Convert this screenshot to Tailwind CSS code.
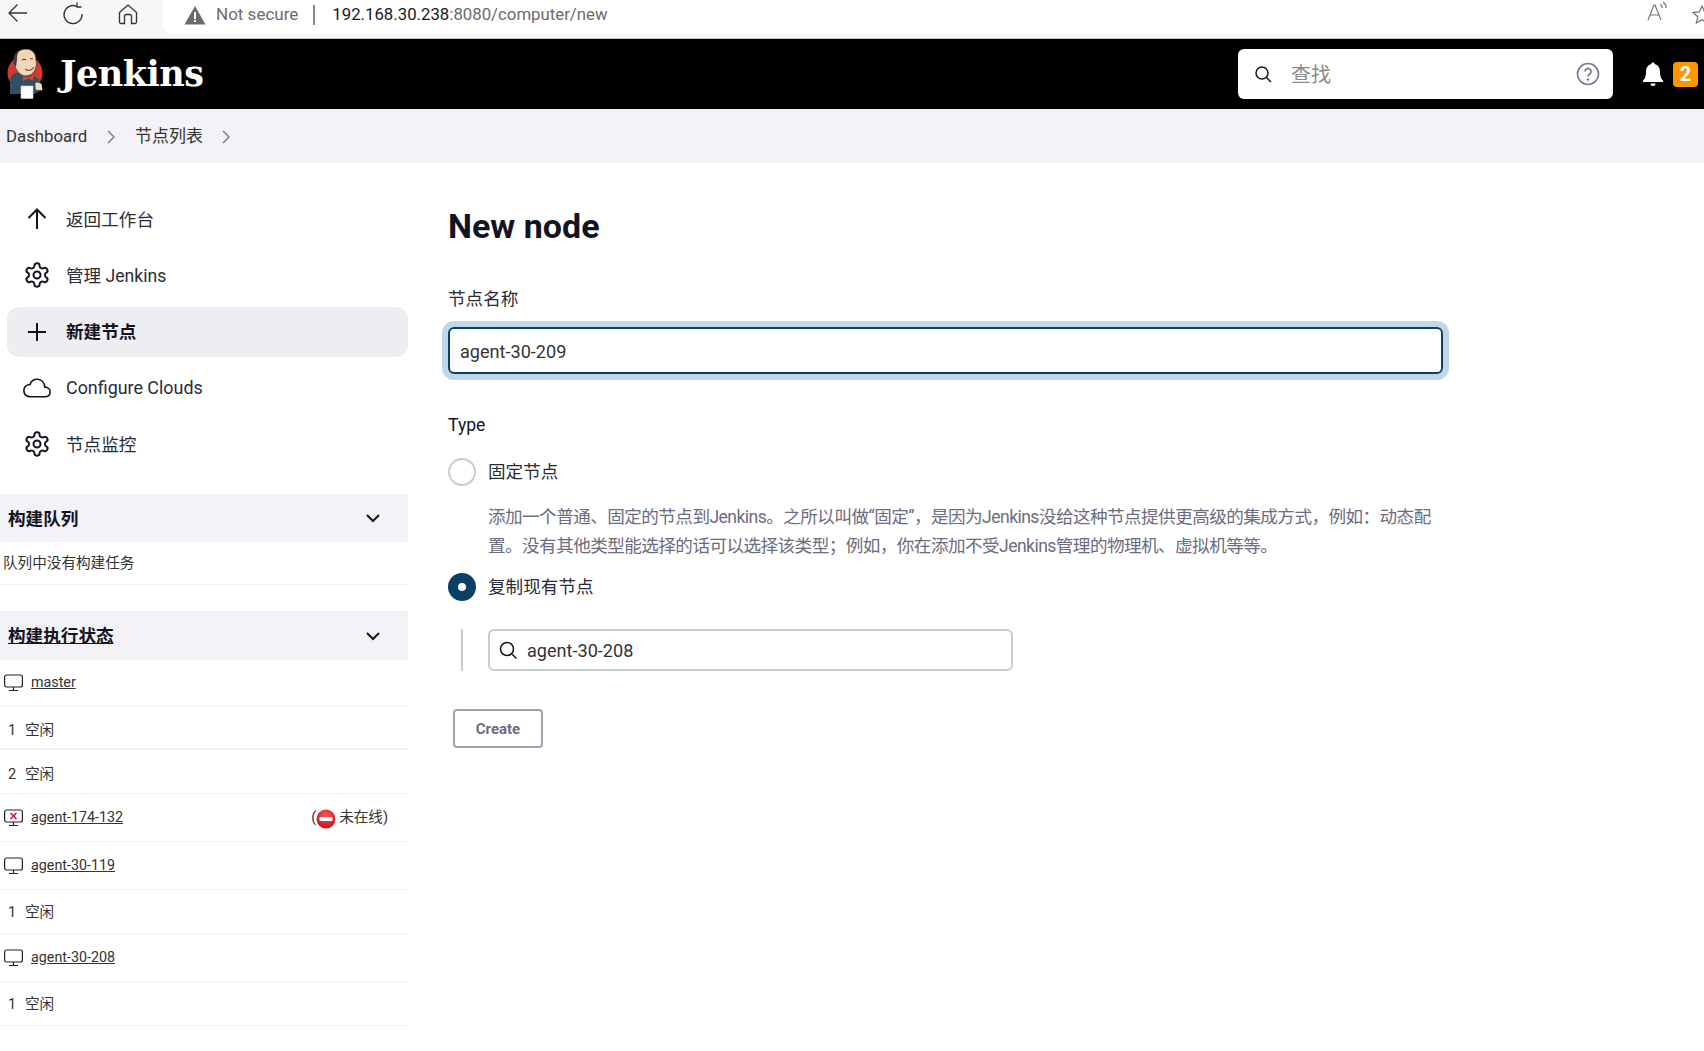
<!DOCTYPE html>
<html lang="zh-CN">
<head>
  <meta charset="UTF-8">
  <meta name="viewport" content="width=device-width, initial-scale=1.0">
  <title>New node [Jenkins]</title>
  <script src="https://cdn.jsdelivr.net/npm/@tailwindcss/browser@4"></script>
</head>
<body class="h-[1051px] overflow-hidden bg-white text-[17.6px] text-[#14141f] font-['Roboto','Noto_Sans_CJK_SC',sans-serif]">

  <!-- browser toolbar -->
  <div class="h-[39px] flex bg-[#f7f7f7] border-b border-[#c4c4c4]">
    <div class="w-[163px] flex items-start text-[#333]">
      <svg class="ml-[7px] mt-[2px]" width="22" height="22" viewBox="0 0 22 22" fill="none" stroke="currentColor" stroke-width="1.3"><path d="M20 11H2M10.5 2.5 2 11l8.500 8.500"/></svg>
      <svg class="ml-[33px] mt-[2px]" width="22" height="24" viewBox="0 0 22 24" fill="none" stroke="currentColor" stroke-width="1.3"><path d="M15 4.500A9 9 0 1 0 20 12M15 .5v4.500h4.500"/></svg>
      <svg class="ml-[33px] mt-[2px]" width="22" height="24" viewBox="0 0 22 24" fill="none" stroke="currentColor" stroke-width="1.3"><path d="M2.500 10.500 11 3l8.500 7.500V20a1.500 1.500 0 0 1-1.500 1.500h-3.500v-7a2 2 0 0 0-2-2h-3a2 2 0 0 0-2 2v7H4A1.500 1.500 0 0 1 2.500 20z"/></svg>
    </div>
    <div class="flex-1 h-[33px] pb-[4px] bg-white rounded-bl-lg flex items-center relative overflow-hidden">
      <svg class="ml-[21px]" width="22" height="20" viewBox="0 0 22 20"><path d="M11 1 21.500 19.500H.5z" fill="#6b6b6b"/><path d="M10 7h2v7h-2zM10 15h2v2h-2z" fill="#fff"/></svg>
      <span class="ml-[10px] text-[17px] leading-none text-[#6b6b6b]">Not secure</span>
      <span class="ml-[15px] w-[2px] h-[20px] bg-[#8a8a8a]"></span>
      <span class="ml-[17px] text-[16.8px] leading-none text-[#1a1a1a]">192.168.30.238<span class="text-[#6b6b6b]">:8080/computer/new</span></span>
      <svg class="absolute left-[1483px] top-[1px]" width="22" height="22" viewBox="0 0 22 22" fill="none" stroke="#777" stroke-width="1.200"><path d="M2 19 8 4h1l6 15M4.500 14h9M14 3c1.500 1 2.200 2.500 2.200 4M17 1c2 1.500 3.200 3.500 3.200 6"/></svg>
      <svg class="absolute left-[1527px] top-[3px]" width="24" height="24" viewBox="0 0 24 24" fill="none" stroke="#777" stroke-width="1.300"><path d="m12 3 2.700 6 6.300.6-4.800 4.200 1.400 6.200-5.600-3.300L6.400 20l1.400-6.200L3 9.600 9.300 9z"/></svg>
    </div>
  </div>

  <!-- jenkins header -->
  <header class="h-[70px] bg-black flex items-center">
    <svg class="ml-[7px]" width="37" height="50" viewBox="0 0 37 50">
      <circle cx="18" cy="24" r="17.500" fill="#d33833"/>
      <path d="M3 45V31c0-4 4-7 9-8l10 3c5 0 11 3 11 9v7l-6 3z" fill="#335061"/>
      <path d="M14 37h12v12.500H14z" fill="#fff" stroke="#ccc" stroke-width=".6"/>
      <path d="M29 34l5 1 1 6-6-1z" fill="#f0d6b7" stroke="#fff" stroke-width=".8"/>
      <path d="m16 26 5 2.500 6-3-1 6-5-2-5 2.500z" fill="#e23c36"/>
      <path d="M7 13C6 5 12 0 19 0c7 0 10 5 10 11 0 2 1 4 0 7-1 5-5 9-10 9-6 0-11-6-12-14z" fill="#f0d6b7" stroke="#3a2a22" stroke-width=".7"/>
      <path d="M7 15C6 8 8 3 13 1c-3 3-3 7-3 10l-1 7z" fill="#4a3a34"/>
      <path d="M15 11c1.500-1 2.500-1 4 0M23 10c1-.5 2-.5 3 0M18 20c2 2 7 2 9-2" fill="none" stroke="#3a2a22" stroke-width="1"/>
    </svg>
    <span class="ml-[16px] pb-[1px] text-[35px] font-bold text-white leading-none font-['DejaVu_Serif','Liberation_Serif',serif] tracking-[-0.5px]">Jenkins</span>
    <div class="ml-auto w-[375px] h-[50px] bg-white rounded-md flex items-center">
      <svg class="ml-[15px]" width="20" height="20" viewBox="0 0 20 20" fill="none" stroke="#14141f" stroke-width="1.500"><circle cx="9" cy="9" r="6"/><path d="m13.500 13.500 4.500 4.500"/></svg>
      <span class="ml-[18px] mt-[2px] text-[20px] text-[#8a8a8a]">查找</span>
      <svg class="ml-auto mr-[13px]" width="24" height="24" viewBox="0 0 24 24" fill="none"><circle cx="12" cy="12" r="10.500" stroke="#7a7a95" stroke-width="1.600"/><path d="M9 9.500a3 3 0 1 1 4.700 2.400c-1 .7-1.700 1.300-1.700 2.600" stroke="#7a7a95" stroke-width="1.800"/><circle cx="12" cy="17.500" r="1.200" fill="#7a7a95"/></svg>
    </div>
    <svg class="ml-[28px]" width="24" height="26" viewBox="0 0 24 26" fill="#fff"><path d="M12 1.500c1 0 1.600.7 1.700 1.600C17 4 19 6.800 19 10.500c0 5 1 7 3 9v1.500H2v-1.500c2-2 3-4 3-9 0-3.700 2-6.500 5.300-7.400.1-.9.700-1.600 1.700-1.600zM9.500 22.500h5a2.500 2.500 0 0 1-5 0z"/></svg>
    <span class="ml-[8px] mr-[6px] w-[25px] h-[25px] rounded-[4px] bg-[#ff9800] text-white font-bold text-[20px] flex items-center justify-center">2</span>
  </header>

  <!-- breadcrumb -->
  <nav class="h-[54px] pt-[2px] bg-[#f2f2f7] flex items-center pl-[6px] text-[#333]">
    <span class="w-[81px] text-[16.800px]">Dashboard</span>
    <svg class="ml-[19px]" width="10" height="14" viewBox="0 0 10 14" fill="none" stroke="#777" stroke-width="1.300"><path d="m2 1 6 6-6 6"/></svg>
    <span class="ml-[19px] text-[17px]">节点列表</span>
    <svg class="ml-[18px]" width="10" height="14" viewBox="0 0 10 14" fill="none" stroke="#777" stroke-width="1.300"><path d="m2 1 6 6-6 6"/></svg>
  </nav>

  <div class="flex">
    <!-- sidebar -->
    <aside class="w-[408px] shrink-0 pt-[31px]">
      <ul class="flex flex-col gap-[6.300px] pl-[7px]">
        <li class="h-[50px] flex items-center pl-[16px] text-[#2b2b36]">
          <svg width="28" height="28" viewBox="0 0 28 28" fill="none" stroke="#14141f" stroke-width="2"><path d="M14 24V5M5.500 13 14 4.500l8.500 8.500"/></svg>
          <span class="ml-[15px] mt-[2px]">返回工作台</span>
        </li>
        <li class="h-[50px] flex items-center pl-[16px] text-[#2b2b36]">
          <svg width="28" height="28" viewBox="0 0 24 24" fill="none" stroke="#14141f" stroke-width="1.700"><path d="M12.220 2h-.44a2 2 0 0 0-2 2v.18a2 2 0 0 1-1 1.730l-.43.250a2 2 0 0 1-2 0l-.15-.08a2 2 0 0 0-2.730.730l-.22.380a2 2 0 0 0 .730 2.730l.15.100a2 2 0 0 1 1 1.720v.510a2 2 0 0 1-1 1.740l-.15.090a2 2 0 0 0-.730 2.730l.22.380a2 2 0 0 0 2.730.730l.15-.08a2 2 0 0 1 2 0l.43.250a2 2 0 0 1 1 1.730V20a2 2 0 0 0 2 2h.44a2 2 0 0 0 2-2v-.18a2 2 0 0 1 1-1.730l.43-.25a2 2 0 0 1 2 0l.15.08a2 2 0 0 0 2.730-.730l.22-.39a2 2 0 0 0-.730-2.730l-.15-.08a2 2 0 0 1-1-1.740v-.5a2 2 0 0 1 1-1.740l.15-.09a2 2 0 0 0 .730-2.730l-.22-.38a2 2 0 0 0-2.730-.730l-.15.08a2 2 0 0 1-2 0l-.43-.25a2 2 0 0 1-1-1.730V4a2 2 0 0 0-2-2z"/><circle cx="12" cy="12" r="3"/></svg>
          <span class="ml-[15px] mt-[2px]">管理 Jenkins</span>
        </li>
        <li class="h-[50px] w-[401px] flex items-center pl-[16px] bg-[#eeeef2] rounded-xl font-bold">
          <svg width="28" height="28" viewBox="0 0 28 28" fill="none" stroke="#14141f" stroke-width="2"><path d="M14 5v18M5 14h18"/></svg>
          <span class="ml-[15px] mt-[2px]">新建节点</span>
        </li>
        <li class="h-[50px] flex items-center pl-[16px] text-[#2b2b36]">
          <svg width="28" height="28" viewBox="0 0 512 512" fill="none" stroke="#14141f" stroke-width="30"><path d="M400 240c-8.890-89.540-71-144-144-144-69 0-113.440 48.200-128 96-60 6-112 43.590-112 112 0 66 54 112 120 112h260c55 0 100-27.440 100-88 0-59.820-53-85.760-96-88z"/></svg>
          <span class="ml-[15px] mt-[2px] text-[17.900px]">Configure Clouds</span>
        </li>
        <li class="h-[50px] flex items-center pl-[16px] text-[#2b2b36]">
          <svg width="28" height="28" viewBox="0 0 24 24" fill="none" stroke="#14141f" stroke-width="1.700"><path d="M12.220 2h-.44a2 2 0 0 0-2 2v.18a2 2 0 0 1-1 1.730l-.43.250a2 2 0 0 1-2 0l-.15-.08a2 2 0 0 0-2.730.730l-.22.380a2 2 0 0 0 .730 2.730l.15.100a2 2 0 0 1 1 1.720v.510a2 2 0 0 1-1 1.740l-.15.090a2 2 0 0 0-.730 2.730l.22.380a2 2 0 0 0 2.730.730l.15-.08a2 2 0 0 1 2 0l.43.250a2 2 0 0 1 1 1.730V20a2 2 0 0 0 2 2h.44a2 2 0 0 0 2-2v-.18a2 2 0 0 1 1-1.730l.43-.25a2 2 0 0 1 2 0l.15.08a2 2 0 0 0 2.730-.730l.22-.39a2 2 0 0 0-.730-2.730l-.15-.08a2 2 0 0 1-1-1.740v-.5a2 2 0 0 1 1-1.740l.15-.09a2 2 0 0 0 .730-2.730l-.22-.38a2 2 0 0 0-2.730-.730l-.15.08a2 2 0 0 1-2 0l-.43-.25a2 2 0 0 1-1-1.730V4a2 2 0 0 0-2-2z"/><circle cx="12" cy="12" r="3"/></svg>
          <span class="ml-[15px] mt-[2px]">节点监控</span>
        </li>
      </ul>

      <section class="mt-[25px]">
        <div class="h-[48px] bg-[#f2f2f7] flex items-center justify-between pl-[8px] pr-[24px] font-bold">
          <span class="mt-[2px]">构建队列</span>
          <svg width="22" height="22" viewBox="0 0 22 22" fill="none" stroke="#14141f" stroke-width="2"><path d="m5 8 6 6 6-6"/></svg>
        </div>
        <div class="h-[43px] pt-[2px] flex items-center pl-[3px] text-[14.600px] text-[#333] border-b border-[#f0f0f5]">队列中没有构建任务</div>
      </section>

      <section class="mt-[26px] text-[14.600px] text-[#333]">
        <div class="h-[49px] bg-[#f2f2f7] flex items-center justify-between pl-[8px] pr-[24px] font-bold text-[17.600px] text-[#14141f]">
          <span class="underline mt-[2px]">构建执行状态</span>
          <svg width="22" height="22" viewBox="0 0 22 22" fill="none" stroke="#14141f" stroke-width="2"><path d="m5 8 6 6 6-6"/></svg>
        </div>
        <div class="h-[47px] flex items-center pl-[4px] border-b border-[#f0f0f5]">
          <svg width="19" height="18" viewBox="0 0 19 18" fill="none" stroke="#222" stroke-width="1.200"><rect x=".6" y="1" width="17.800" height="12" rx="2"/><path d="M9.500 13v3M5 16.500h9"/></svg>
          <span class="ml-[8px] underline text-[14.300px]">master</span>
        </div>
        <div class="h-[43px] pt-[7px] flex items-center pl-[8px] border-b-2 border-[#f2f2f7]"><span class="w-[17px]">1</span><span>空闲</span></div>
        <div class="h-[44px] pt-[7px] flex items-center pl-[8px] border-b border-[#f0f0f5]"><span class="w-[17px]">2</span><span>空闲</span></div>
        <div class="h-[48px] flex items-center pl-[4px] border-b border-[#f0f0f5]">
          <svg width="19" height="18" viewBox="0 0 19 18" fill="none" stroke="#222" stroke-width="1.200"><rect x=".6" y="1" width="17.800" height="12" rx="2"/><path d="M9.500 13v3M5 16.500h9"/><path d="m6.500 4 6 6M12.500 4l-6 6" stroke="#e3002b" stroke-width="1.500"/></svg>
          <span class="ml-[8px] underline text-[14.300px]">agent-174-132</span>
          <span class="ml-auto mr-[20px] flex items-center">(<svg class="mt-[2px]" width="20" height="20" viewBox="0 0 20 20"><defs><radialGradient id="stop" cx="50%" cy="30%" r="70%"><stop offset="0%" stop-color="#f4585c"/><stop offset="100%" stop-color="#c8101a"/></radialGradient></defs><circle cx="10" cy="10" r="9.500" fill="url(#stop)"/><rect x="3.500" y="8" width="13" height="4" rx="1" fill="#fff"/></svg><span class="ml-[3px]">未在线)</span></span>
        </div>
        <div class="h-[48px] flex items-center pl-[4px] border-b border-[#f0f0f5]">
          <svg width="19" height="18" viewBox="0 0 19 18" fill="none" stroke="#222" stroke-width="1.200"><rect x=".6" y="1" width="17.800" height="12" rx="2"/><path d="M9.500 13v3M5 16.500h9"/></svg>
          <span class="ml-[8px] underline text-[14.300px]">agent-30-119</span>
        </div>
        <div class="h-[44px] pt-[3px] flex items-center pl-[8px] border-b border-[#f0f0f5]"><span class="w-[17px]">1</span><span>空闲</span></div>
        <div class="h-[48px] flex items-center pl-[4px] border-b border-[#f0f0f5]">
          <svg width="19" height="18" viewBox="0 0 19 18" fill="none" stroke="#222" stroke-width="1.200"><rect x=".6" y="1" width="17.800" height="12" rx="2"/><path d="M9.500 13v3M5 16.500h9"/></svg>
          <span class="ml-[8px] underline text-[14.300px]">agent-30-208</span>
        </div>
        <div class="h-[44px] pt-[3px] flex items-center pl-[8px] border-b border-[#f0f0f5]"><span class="w-[17px]">1</span><span>空闲</span></div>
      </section>
    </aside>

    <!-- main form -->
    <main class="ml-[40px] w-[995px] pt-[40px]">
      <h1 class="text-[34px] font-bold leading-[46px]">New node</h1>
      <label class="block mt-[37px] leading-[26px] text-[#2b2b36]">节点名称</label>
      <div class="mt-[15px] h-[47px] pt-[2px] border-2 border-[#0b3f63] rounded-md ring-[6px] ring-[#bfd7e8] flex items-center pl-[10px] text-[18.100px] text-[#333]">agent-30-209</div>

      <div class="mt-[38px] leading-[26px]">Type</div>

      <div class="mt-[20px] flex items-center h-[28px]">
        <span class="w-[28px] h-[28px] rounded-full border-2 border-[#c3ced4]"></span>
        <span class="ml-[12px] text-[#2b2b36]">固定节点</span>
      </div>
      <p class="mt-[17px] ml-[40px] w-[950px] leading-[29px] tracking-[-0.56px] text-[#6d6b80]">添加一个普通、固定的节点到Jenkins。之所以叫做“固定”，是因为Jenkins没给这种节点提供更高级的集成方式，例如：动态配置。没有其他类型能选择的话可以选择该类型；例如，你在添加不受Jenkins管理的物理机、虚拟机等等。</p>

      <div class="mt-[12px] flex items-center h-[28px]">
        <span class="w-[28px] h-[28px] rounded-full bg-[#0b3f63] flex items-center justify-center"><span class="w-[8px] h-[8px] rounded-full bg-white"></span></span>
        <span class="ml-[12px] text-[#2b2b36]">复制现有节点</span>
      </div>

      <div class="mt-[28px] ml-[13px] pl-[25px] border-l-2 border-[#c3ced4]">
        <div class="w-[525px] h-[42px] border-2 border-[#c3ced4] rounded-md flex items-center pl-[8px] text-[18.100px] text-[#333]">
          <svg width="20" height="20" viewBox="0 0 20 20" fill="none" stroke="#14141f" stroke-width="1.500"><circle cx="9" cy="9" r="6.500"/><path d="m14 14 4.500 4.500"/></svg>
          <span class="ml-[9px] mt-[1px]">agent-30-208</span>
        </div>
      </div>

      <button class="block mt-[38px] ml-[5px] w-[90px] h-[39px] pt-[1px] border-2 border-[#9aa3ad] rounded-[4px] text-[15px] font-bold text-[#6d6b80]">Create</button>
    </main>
  </div>
</body>
</html>
